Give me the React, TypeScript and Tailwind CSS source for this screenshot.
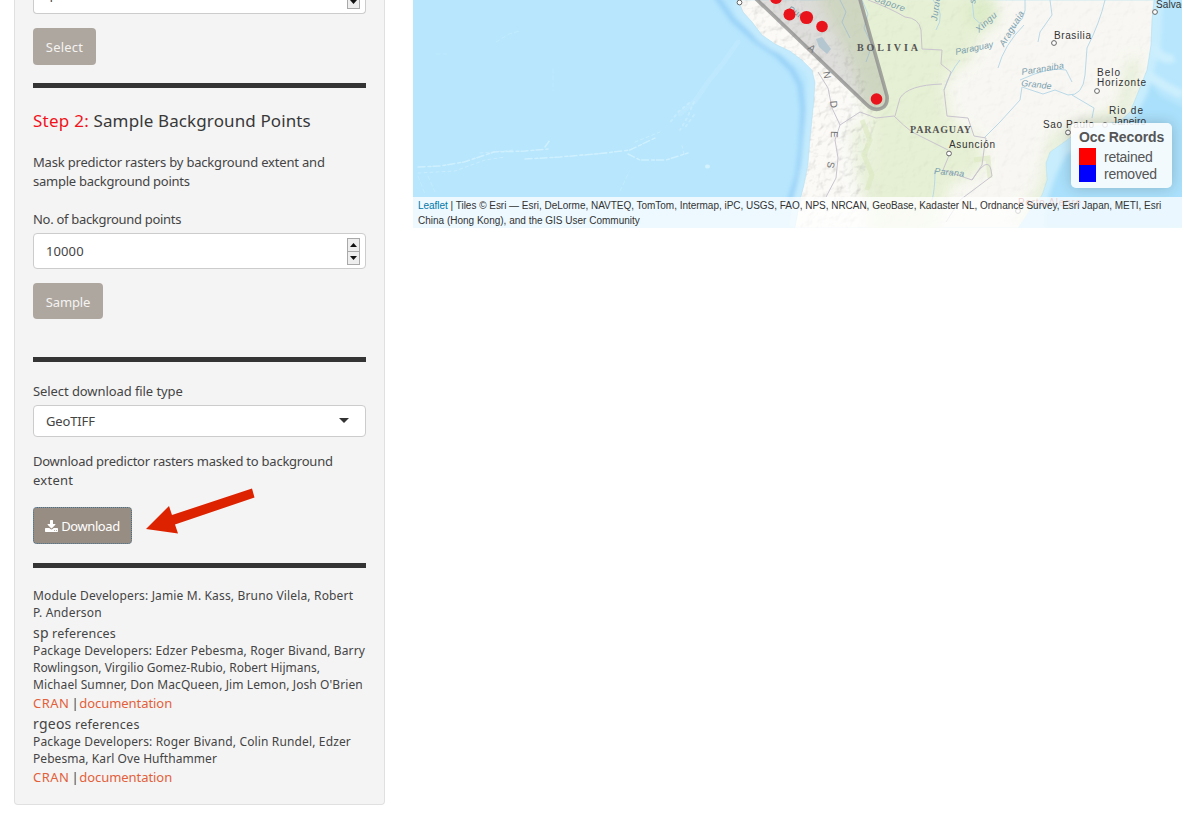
import type { ReactNode } from 'react';

const Rule = ({ className }: { className: string }) => (
  <hr className={`h-[5px] w-full shrink-0 border-0 bg-[#343434] ${className}`} />
);

const Line = ({ children, className = '' }: { children: ReactNode; className?: string }) => (
  <span className={`block whitespace-nowrap ${className}`}>{children}</span>
);

const DownloadIcon = () => (
  <svg width="13" height="12" viewBox="0 0 1664 1536" fill="currentColor">
    <path d="M1280 1344q0-26-19-45t-45-19-45 19-19 45 19 45 45 19 45-19 19-45zm256 0q0-26-19-45t-45-19-45 19-19 45 19 45 45 19 45-19 19-45zm128-224v320q0 40-28 68t-68 28h-1472q-40 0-68-28t-28-68v-320q0-40 28-68t68-28h465l135 136q58 56 136 56t136-56l136-136h464q40 0 68 28t28 68zm-325-569q17 41-14 70l-448 448q-18 19-45 19t-45-19l-448-448q-31-29-14-70 17-39 59-39h256v-448q0-26 19-45t45-19h256q26 0 45 19t19 45v448h256q42 0 59 39z" />
  </svg>
);

const Spinner = () => (
  <span className="flex h-[27px] w-[13px] shrink-0 flex-col border border-[#a9a9a9] bg-[#eeeeee]">
    <span className="flex flex-1 items-center justify-center border-b border-[#a9a9a9]">
      <svg width="7" height="4" viewBox="0 0 7 4"><path d="M0 4 3.5 0 7 4Z" fill="#111" /></svg>
    </span>
    <span className="flex flex-1 items-center justify-center">
      <svg width="7" height="4" viewBox="0 0 7 4"><path d="M0 0 3.5 4 7 0Z" fill="#111" /></svg>
    </span>
  </span>
);

const Links = ({ className }: { className: string }) => (
  <p className={`text-[13px] leading-[19px] whitespace-nowrap text-[#444] ${className}`}>
    <a className="tracking-[0.5px] text-[#e2603a]">CRAN</a>
    <span className="tracking-[-1.4px]"> | </span>
    <a className="tracking-[-0.05px] text-[#e2603a]">documentation</a>
  </p>
);

const rivers = [
  'M862 0 868 14 864 28 872 45 866 62',
  'M840 0 846 12 842 22 850 38',
  'M944 90Q950 72 960 60',
  'M933 0Q946 14 936 30',
  'M972 0 974 18 985 28M1008 30Q1028 22 1025 0',
  'M1050 0 1052 15 1040 32 1038 42',
  'M1105 0Q1100 22 1087 48L1085 75Q1083 96 1068 95L1055 90 1043 94 1022 87 1020 100 1000 122 984 138',
  'M1020 80Q1050 66 1066 70L1072 82',
  'M1072 95 1094 108 1092 118',
  'M998 68Q1004 45 1024 25',
  'M935 170Q935 190 932 200',
];

const borders = [
  'M868 0Q890 8 905 17 919 18 921 30L922 49 942 50 941 64 951 72 944 90 947 116 968 118 974 136 986 138 984 150 982 165 972 180',
  'M950 153 943 170 972 180Q988 155 991 170L992 176 960 200 946 222',
  'M818 72 828 88 832 108 840 125 835 140 838 158 836 178 826 197',
  'M840 125 860 112 876 118 894 116Q904 126 912 132L948 150',
  'M895 116 900 98Q908 85 942 84',
];

const cities: [number, number][] = [[739.5, 2.5], [1054, 43], [1097, 91], [1155, 12], [1068, 132.5], [949, 153.5], [1105, 125], [1018, 211]];

const dots: [number, number, number][] = [[776, -2, 6], [789.5, 14.5, 6], [806.5, 17.5, 6.6], [822, 26.5, 5.8], [876.5, 99, 5.8]];

const coastWest = 'M738 0 743 12 752 22 762 35 775 44 790 51 802 60 812 70 815 82 814 100 812 120 810 140 808 165 804 185 800 200 795 228';
const land = `${coastWest}H1018L1030 210 1042 195 1047 180 1046 163 1050 152 1060 145 1078 132 1100 125 1120 121 1130 112 1139 90 1147 70 1151 45 1152 20 1154 0Z`;

const MapDrawing = () => (
  <svg className="block" width="769" height="228" viewBox="413 0 769 228">
    <defs>
      <clipPath id="land"><path d={land} /></clipPath>
      <clipPath id="mountains"><path d="M738 0H800L850 50 880 110 868 150 858 228H795L804 185 812 120 814 82 802 60 762 35Z" /></clipPath>
      <filter id="soft" x="-30%" y="-30%" width="160%" height="160%"><feGaussianBlur stdDeviation="7" /></filter>
      <filter id="shelf"><feGaussianBlur stdDeviation="2.200" /></filter>
      <filter id="relief" x="0" y="0" width="100%" height="100%">
        <feTurbulence type="fractalNoise" baseFrequency="0.1" numOctaves="4" seed="8" />
        <feDiffuseLighting surfaceScale="2.4" lightingColor="#ffffff" diffuseConstant="1.15"><feDistantLight azimuth="225" elevation="58" /></feDiffuseLighting>
      </filter>
    </defs>
    <rect x="413" width="769" height="228" fill="#b7e6fd" />
    <g filter="url(#shelf)" fill="none" strokeLinejoin="round">
      <path d="M716 -4 733 20 755 40 777 55 792 70 800 85 803 110 801 150 798 175 790 200" stroke="#99d1f7" strokeWidth="5" />
      <path d={coastWest} stroke="#c4ebfd" strokeWidth="14" />
      <path d="M1188 228V110L1160 96 1150 82 1125 125 1050 155 1045 228Z" fill="#aae0fb" />
      <path d="M1154 0 1152 45 1139 90 1125 118 1060 147 1048 170 1036 205" stroke="#c8edfd" strokeWidth="18" />
      <path d="M1152 45Q1162 62 1174 58M1148 75 1165 86 1182 95" stroke="#cdeffd" strokeWidth="9" />
    </g>
    <g fill="none" stroke="#d4f2ff" strokeLinecap="round">
      <path d="M738 42 724 62 708 82 695 101 680 114" strokeWidth="5" opacity=".22" />
      <path d="M694 102 687 118 680 130M694 115 684 129M689 103 678 112 669 124" strokeWidth="2" opacity=".5" strokeDasharray="2 4" />
      <path d="M418 167 440 166 464 162 494 152 525 151 548 149M525 159 560 157 596 154 630 150 655 138M545 147 550 140M628 154 640 160 666 160 688 153" strokeWidth="1.500" opacity=".8" strokeDasharray="7 3 3 2" />
      <path d="M418 173 455 171 485 160 505 157M480 153 515 150M580 155 610 153M635 142 660 132M684 154 682 146" opacity=".6" strokeDasharray="3 3" />
      <path d="M436 54H448M496 42 509 34 520 31M553 69V91M620 191 629 172M418 176 425 194M428 176 435 192" opacity=".4" strokeDasharray="4 3" />
      <path d="M707 166.500H708" strokeWidth="4" />
    </g>
    <path d={land} fill="#f8f7f2" stroke="#b5dff0" strokeWidth=".7" />
    <g clipPath="url(#land)">
      <g filter="url(#soft)">
        <path d="M815-10H975L986 25 970 60 945 80 950 118 980 140 985 170 950 185 935 240H870L870 125 850 60Z" fill="#e6f0d4" />
        <ellipse cx="983" cy="12" rx="15" ry="18" fill="#dcebc8" />
        <path d="M1134 60 1125 110 1055 140 1045 190 1015 225" stroke="#dfebcf" strokeWidth="10" fill="none" />
        <path d="M858 125 862 170 875 215" stroke="#e5eed6" strokeWidth="12" fill="none" />
      </g>
      <rect x="738" width="440" height="228" filter="url(#relief)" opacity=".1" className="mix-blend-multiply" />
      <rect x="738" width="145" height="228" filter="url(#relief)" opacity=".36" clipPath="url(#mountains)" className="mix-blend-multiply" />
      <path d="M862 120 870 140 864 155 872 175 867 190M974 160 988 158 990 178" stroke="#dbe8c0" strokeWidth="5" fill="none" opacity=".6" />
    </g>
    <g fill="none" strokeWidth="1">
      {rivers.map((d) => <path key={d} d={d} stroke="#b9d9e8" />)}
      {borders.map((d) => <path key={d} d={d} stroke="#c9c4cf" />)}
    </g>
    <path d="M816 39 822 37 831 49 827 54 819 47Z" fill="#c4dde9" />
    <g fontFamily="Liberation Sans, sans-serif" fontStyle="italic" fontSize="9" fill="#7b9eae" letterSpacing=".5">
      <text transform="translate(874 1) rotate(20)">Sapore</text>
      <text transform="translate(937 21) rotate(-82)">Juruena</text>
      <text transform="translate(979 33) rotate(-43)">Xingu</text>
      <text transform="translate(1004 47) rotate(-59)">Araguaia</text>
      <text transform="translate(956 55) rotate(-12)" letterSpacing="0">Paraguay</text>
      <text transform="translate(1022 75) rotate(-9)" letterSpacing=".2">Paranaiba</text>
      <text transform="translate(1021 86) rotate(6)" letterSpacing=".1">Grande</text>
      <text transform="translate(934 174) rotate(5)" letterSpacing=".2">Parana</text>
      <text transform="translate(975 4) rotate(-80)">s</text>
      <text transform="translate(787 11) rotate(28)">Purus</text>
    </g>
    <path d="M753 -4 866 104Q874 112 882 108 888 105 887 96L859-4Z" fill="#808080" fillOpacity=".24" stroke="#888" strokeOpacity=".72" strokeWidth="3.600" />
    <g fontFamily="Liberation Sans, sans-serif" fontSize="10" fill="#777">
      <text transform="translate(807 49) rotate(38)">A</text>
      <text transform="translate(823 72) rotate(80)">N</text>
      <text transform="translate(830 101) rotate(85)">D</text>
      <text transform="translate(831 131) rotate(92)">E</text>
      <text transform="translate(828 161) rotate(100)">S</text>
    </g>
    {dots.map(([x, y, r]) => <circle key={x} cx={x} cy={y} r={r} fill="#e9141b" />)}
    <g fontFamily="Liberation Serif, serif" fontWeight="bold" fontSize="10" fill="#555">
      <text x="857" y="51" textLength="61">BOLIVIA</text>
      <text x="910" y="133" textLength="61">PARAGUAY</text>
    </g>
    {cities.map(([x, y]) => <circle key={x} cx={x} cy={y} r="2.400" fill="#fff" stroke="#666" strokeWidth="1" />)}
    <g fontFamily="Liberation Sans, sans-serif" fontSize="10" fill="#333">
      <text x="1054" y="39" textLength="37">Brasilia</text>
      <text x="1097" y="76" textLength="23">Belo</text>
      <text x="1097" y="85.500" textLength="49">Horizonte</text>
      <text x="1156" y="8" textLength="40">Salvador</text>
      <text x="1109" y="114" textLength="34">Rio de</text>
      <text x="1112" y="125" textLength="34">Janeiro</text>
      <text x="1043" y="128" textLength="51">Sao Paulo</text>
      <text x="949" y="148" textLength="46">Asunción</text>
      <text x="1018" y="206" textLength="63" fill="#b55">Porto Alegre</text>
    </g>
  </svg>
);

export default function App() {
  return (
    <div className="relative flex h-[820px] w-[1200px] items-start overflow-hidden bg-white font-['Noto_Sans',sans-serif] text-[13px] text-[#444]">
      <aside className="ml-[14px] flex h-[805px] w-[371px] shrink-0 flex-col items-start rounded-b-[4px] border border-t-0 border-[#e0e0e0] bg-[#f4f4f4] px-[18px]">
        <div className="flex h-[14px] w-[333px] shrink-0 items-end justify-between overflow-hidden rounded-b-[4px] border border-t-0 border-[#ccc] bg-white pr-[5px] pb-[4px] pl-[12px]">
          <span className="mb-[2px] text-[13px] leading-[20px]">4</span>
          <Spinner />
        </div>
        <button className="mt-[14px] flex h-[37px] w-[63px] items-center justify-center rounded-[4px] bg-[#aea79f] pt-[3px] text-[13px] tracking-[0.2px] text-[#f5f3f1]">Select</button>
        <Rule className="mt-[18px]" />
        <h4 className="mt-[22px] text-[17px] leading-[22px] tracking-[0.12px] whitespace-nowrap text-[#383838]">
          <span className="tracking-[0.25px] text-[#f2121a]">Step 2:</span> Sample Background Points
        </h4>
        <p className="mt-[21px] leading-[19px]">
          <Line className="tracking-[-0.19px]">Mask predictor rasters by background extent and</Line>
          <Line className="tracking-[-0.25px]">sample background points</Line>
        </p>
        <label className="mt-[19px] leading-[19px] tracking-[-0.3px] whitespace-nowrap">No. of background points</label>
        <div className="mt-[4px] flex h-[36px] w-[333px] items-center justify-between rounded-[4px] border border-[#ccc] bg-white pr-[5px] pl-[12px]">
          <span className="pt-[2px] tracking-[0.1px]">10000</span>
          <Spinner />
        </div>
        <button className="mt-[14px] flex h-[36px] w-[70px] items-center justify-center rounded-[4px] bg-[#aea79f] pt-[3px] text-[13px] tracking-[-0.15px] text-[#f5f3f1]">Sample</button>
        <Rule className="mt-[38px]" />
        <label className="mt-[20px] leading-[19px] tracking-[-0.08px] whitespace-nowrap">Select download file type</label>
        <div className="mt-[4px] flex h-[32px] w-[333px] items-center justify-between rounded-[4px] border border-[#ccc] bg-white pr-[16px] pl-[12px]">
          <span className="pt-[2px] tracking-[-0.15px]">GeoTIFF</span>
          <svg className="-mt-[2px]" width="10" height="5" viewBox="0 0 10 5"><path d="M0 0H10L5 5Z" fill="#333" /></svg>
        </div>
        <p className="mt-[15px] leading-[19px]">
          <Line className="tracking-[-0.24px]">Download predictor rasters masked to background</Line>
          <Line className="tracking-[0.25px]">extent</Line>
        </p>
        <button className="mt-[17px] flex h-[37px] w-[99px] items-center justify-center gap-[3px] rounded-[4px] border border-dotted border-[#46708f] bg-[#978d82] pt-px text-[13px] text-white">
          <DownloadIcon />
          <span className="pt-[2px] tracking-[-0.4px] whitespace-nowrap">Download</span>
        </button>
        <Rule className="mt-[19px]" />
        <p className="mt-[19px] text-[12px] leading-[17px]">
          <Line className="tracking-[0.16px]">Module Developers: Jamie M. Kass, Bruno Vilela, Robert</Line>
          <Line className="tracking-[0.2px]">P. Anderson</Line>
        </p>
        <h5 className="mt-[2px] h-[19px] text-[12.5px] leading-[19px] tracking-[0.18px] whitespace-nowrap"><span className="text-[14px]">sp</span> references</h5>
        <p className="text-[12px] leading-[17px]">
          <Line className="tracking-[0.13px]">Package Developers: Edzer Pebesma, Roger Bivand, Barry</Line>
          <Line>Rowlingson, Virgilio Gomez-Rubio, Robert Hijmans,</Line>
          <Line className="tracking-[0.1px]">Michael Sumner, Don MacQueen, Jim Lemon, Josh O'Brien</Line>
        </p>
        <Links className="mt-px" />
        <h5 className="mt-px h-[19px] text-[12.5px] leading-[19px] tracking-[0.25px] whitespace-nowrap"><span className="text-[14px]">rgeos</span> references</h5>
        <p className="text-[12px] leading-[17px]">
          <Line className="tracking-[0.14px]">Package Developers: Roger Bivand, Colin Rundel, Edzer</Line>
          <Line className="tracking-[0.07px]">Pebesma, Karl Ove Hufthammer</Line>
        </p>
        <Links className="mt-px" />
      </aside>

      <main className="relative ml-[28px] h-[228px] w-[769px] shrink-0 overflow-hidden font-['Liberation_Sans',sans-serif]">
        <MapDrawing />
        <section className="absolute top-[123px] right-[10px] h-[65px] w-[101px] rounded-[5px] bg-white/85 px-[8px] pt-[5px] text-[#555] shadow-[0_0_14px_rgba(0,0,0,0.2)]">
          <h3 className="text-[14px] leading-[19px] font-bold tracking-[-0.12px] whitespace-nowrap">Occ Records</h3>
          <div className="mt-px text-[14px] tracking-[-0.25px]">
            <div className="flex h-[17px] items-center gap-[8px]"><i className="h-[17px] w-[17px] bg-[#f00]" /><span className="pt-[2px]">retained</span></div>
            <div className="flex h-[17px] items-center gap-[8px]"><i className="h-[17px] w-[17px] bg-[#00f]" /><span className="pt-[2px]">removed</span></div>
          </div>
        </section>
        <footer className="absolute bottom-0 left-0 h-[31px] w-[769px] bg-white/75 pt-px pl-[5px] text-[10px] leading-[15px] text-[#333]">
          <Line className="tracking-[-0.024px]"><a className="text-[#0078a8]">Leaflet</a> | Tiles © Esri — Esri, DeLorme, NAVTEQ, TomTom, Intermap, iPC, USGS, FAO, NPS, NRCAN, GeoBase, Kadaster NL, Ordnance Survey, Esri Japan, METI, Esri</Line>
          <Line>China (Hong Kong), and the GIS User Community</Line>
        </footer>
      </main>

      <svg className="pointer-events-none absolute top-[486px] left-[144px]" width="114" height="50" viewBox="144 486 114 50">
        <path d="M146 529 169 506 172 515 252 488.500 254.500 497.500 175 524.500 178 533.500Z" fill="#dd2200" />
      </svg>
    </div>
  );
}
